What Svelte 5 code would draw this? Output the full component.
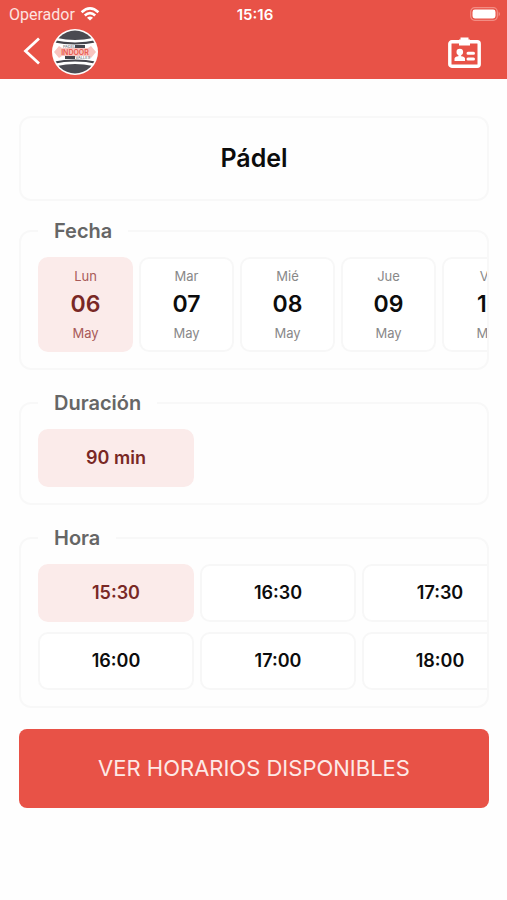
<script>
  const days = [
    { name: 'Lun', day: '06', month: 'May' },
    { name: 'Mar', day: '07', month: 'May' },
    { name: 'Mié', day: '08', month: 'May' },
    { name: 'Jue', day: '09', month: 'May' },
    { name: 'Vie', day: '10', month: 'May' }
  ];
  const durations = ['90 min'];
  const hours = ['15:30', '16:00', '16:30', '17:00', '17:30', '18:00'];

  let day = $state('06');
  let duration = $state('90 min');
  let hour = $state('15:30');
</script>

<div class="app">
  <header>
    <div class="status">
      <span class="carrier">
        Operador
        <svg width="20" height="16" viewBox="0 0 20 16" aria-hidden="true">
          <g fill="none" stroke="#fff" stroke-width="2.6">
            <path d="M1.6 6.2Q10-1.6 18.4 6.2" />
            <path d="M4.8 9.5Q10 4.7 15.2 9.5" />
          </g>
          <path d="M10 14.6L7 11.7Q10 9.2 13 11.7Z" fill="#fff" />
        </svg>
      </span>
      <span class="clock">15:16</span>
      <svg class="battery" width="31" height="14" viewBox="0 0 31 14" aria-hidden="true">
        <rect x="0.7" y="0.7" width="26.6" height="12.6" rx="4" fill="none" stroke="#f28d84" stroke-width="1.2" />
        <rect x="2.5" y="2.5" width="23" height="9" rx="2.4" fill="#fff" />
        <path d="M28.6 4.6Q31.4 7 28.6 9.4Z" fill="#f28d84" />
      </svg>
    </div>
    <nav>
      <button class="icon" aria-label="Volver">
        <svg width="18" height="30" viewBox="0 0 18 30">
          <path d="M16 1.5L2.5 14L16 26.5" fill="none" stroke="#fff" stroke-width="2.8" />
        </svg>
      </button>
      <svg class="logo" width="46" height="46" viewBox="0 0 46 46" role="img" aria-label="Padel Indoor Valles">
        <defs><clipPath id="ball"><circle cx="23" cy="23" r="21.4" /></clipPath></defs>
        <circle cx="23" cy="23" r="23" fill="#fff" />
        <g clip-path="url(#ball)">
          <path d="M5 0H41V9Q23 13 5 9Z" fill="#4b4b52" />
          <path d="M5 46H41V37Q23 33 5 37Z" fill="#4b4b52" />
          <path d="M0 12Q23 17 46 12" fill="none" stroke="#45454c" stroke-width="2.2" />
          <path d="M0 34Q23 29 46 34" fill="none" stroke="#45454c" stroke-width="2.2" />
          <path d="M2 23L7 17L10 19H36L39 17L44 23L39 29L36 27H10L7 29Z" fill="#f9c4bf" />
          <rect x="23" y="16" width="10" height="3" fill="#45454c" />
          <rect x="13" y="27" width="10" height="3" fill="#45454c" />
          <text x="11" y="19" font-size="4" fill="#55555c">PADEL</text>
          <text x="23" y="25.7" font-size="7" font-weight="600" text-anchor="middle" fill="#e8584c">INDOOR</text>
          <text x="23.5" y="30.4" font-size="4" fill="#55555c">VALLES</text>
        </g>
      </svg>
      <button class="icon card" aria-label="Carnet">
        <svg width="33" height="31" viewBox="0 0 33 31">
          <rect x="1.8" y="4.8" width="29.4" height="24.4" rx="2" fill="none" stroke="#fff" stroke-width="3.4" />
          <path d="M12.5 0.5H20.5V2.5H22V8.5H11V2.5H12.5Z" fill="#fff" />
          <circle cx="11.8" cy="15" r="3.3" fill="#fff" />
          <path d="M6.5 24V21.6Q6.8 19.6 10.4 19.2V17H13.2V19.2Q16.8 19.6 17 21.6V24Z" fill="#fff" />
          <path d="M20 16.2H25.5M20 22H25.5" stroke="#fff" stroke-width="3" stroke-linecap="round" />
        </svg>
      </button>
    </nav>
  </header>

  <main>
    <h1>Pádel</h1>

    <form onsubmit={(e) => e.preventDefault()}>
      <fieldset>
        <legend>Fecha</legend>
        <div class="scroller days">
          {#each days as d}
            <button type="button" class="option day" class:selected={day === d.day} aria-pressed={day === d.day} onclick={() => (day = d.day)}>
              <small>{d.name}</small>
              <strong>{d.day}</strong>
              <small>{d.month}</small>
            </button>
          {/each}
        </div>
      </fieldset>

      <fieldset>
        <legend>Duración</legend>
        <div class="scroller hours">
          {#each durations as d}
            <button type="button" class="option" class:selected={duration === d} aria-pressed={duration === d} onclick={() => (duration = d)}>{d}</button>
          {/each}
        </div>
      </fieldset>

      <fieldset>
        <legend>Hora</legend>
        <div class="scroller hours two">
          {#each hours as h}
            <button type="button" class="option" class:selected={hour === h} aria-pressed={hour === h} onclick={() => (hour = h)}>{h}</button>
          {/each}
        </div>
      </fieldset>

      <button class="submit">VER HORARIOS DISPONIBLES</button>
    </form>
  </main>
</div>

<style>
  :global(body) {
    margin: 0;
    background: #fefefe;
  }
  .app {
    font-family: Inter, 'Liberation Sans', sans-serif;
    color: #0c0c0c;
  }
  button {
    font: inherit;
    color: inherit;
    cursor: pointer;
  }
  svg {
    display: block;
  }
  header {
    background: #e85247;
    color: #fff;
    padding-bottom: 3px;
  }
  .status {
    display: grid;
    grid-template-columns: 1fr auto 1fr;
    align-items: center;
    height: 28px;
    padding: 0 6px 0 9px;
  }
  .carrier {
    display: flex;
    align-items: center;
    gap: 5px;
    font-family: Roboto, sans-serif;
    font-size: 16px;
    color: #fde3e0;
  }
  .clock {
    font-size: 15px;
    font-weight: 600;
  }
  .battery {
    justify-self: end;
  }
  nav {
    display: flex;
    align-items: center;
    height: 48px;
    padding: 0 26px 0 23px;
  }
  .icon {
    display: flex;
    padding: 0;
    border: 0;
    background: none;
  }
  .logo {
    margin-left: 11px;
  }
  .card {
    margin-left: auto;
  }
  main {
    padding: 37px 18px 24px 19px;
  }
  form {
    display: flex;
    flex-direction: column;
    gap: 21px;
  }
  h1 {
    margin: 0 0 18px;
    padding: 26px 0;
    border: 2px solid #f8f8f8;
    border-radius: 12px;
    font-size: 25px;
    line-height: 29px;
    font-weight: 600;
    text-align: center;
  }
  fieldset {
    min-width: 0;
    margin: 0;
    padding: 14px 0 16px 17px;
    border: 2px solid #f8f8f8;
    border-radius: 12px;
  }
  legend {
    padding: 0 16px;
    font-size: 20px;
    line-height: 24px;
    font-weight: 600;
    color: #666;
  }
  .scroller {
    display: grid;
    grid-auto-flow: column;
    justify-content: start;
    overflow-x: auto;
    scrollbar-width: none;
  }
  .days {
    grid-auto-columns: 95px;
    column-gap: 6px;
  }
  .hours {
    grid-auto-columns: 156px;
    gap: 10px 6px;
  }
  .two {
    grid-template-rows: auto auto;
  }
  .option {
    padding: 15px 0;
    border: 2px solid #f7f7f7;
    border-radius: 10px;
    background: #fff;
    font-size: 18px;
    line-height: 24px;
    font-weight: 600;
  }
  .day {
    display: flex;
    flex-direction: column;
    align-items: center;
    gap: 4px;
    padding: 8px 0;
  }
  small {
    font-size: 13px;
    line-height: 18px;
    font-weight: 400;
    color: #888;
  }
  strong {
    font-size: 23px;
    line-height: 31px;
    font-weight: 600;
  }
  .selected {
    border-color: #fbebea;
    background: #fbebea;
    color: #792825;
  }
  .selected small {
    color: #a85a58;
  }
  .submit {
    padding: 25px 0;
    border: 0;
    border-radius: 8px;
    background: #e85247;
    color: #fde9e6;
    font-size: 22px;
    line-height: 29px;
  }
</style>
